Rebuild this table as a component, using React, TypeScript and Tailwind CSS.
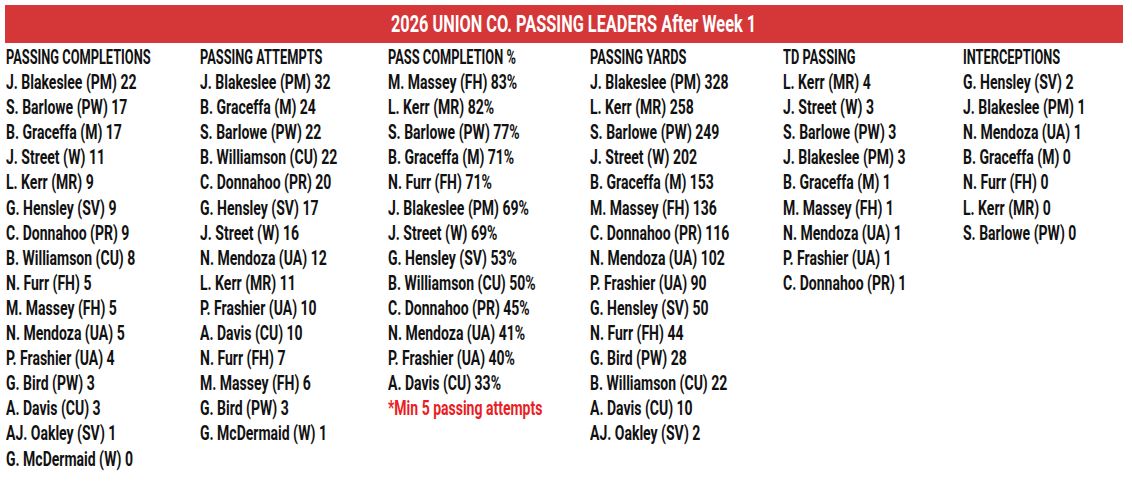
const columns: { title: string; rows: string[]; note?: string }[] = [
  {
    title: "PASSING COMPLETIONS",
    rows: [
      "J. Blakeslee (PM) 22",
      "S. Barlowe (PW) 17",
      "B. Graceffa (M) 17",
      "J. Street (W) 11",
      "L. Kerr (MR) 9",
      "G. Hensley (SV) 9",
      "C. Donnahoo (PR) 9",
      "B. Williamson (CU) 8",
      "N. Furr (FH) 5",
      "M. Massey (FH) 5",
      "N. Mendoza (UA) 5",
      "P. Frashier (UA) 4",
      "G. Bird (PW) 3",
      "A. Davis (CU) 3",
      "AJ. Oakley (SV) 1",
      "G. McDermaid (W) 0",
    ],
  },
  {
    title: "PASSING ATTEMPTS",
    rows: [
      "J. Blakeslee (PM) 32",
      "B. Graceffa (M) 24",
      "S. Barlowe (PW) 22",
      "B. Williamson (CU) 22",
      "C. Donnahoo (PR) 20",
      "G. Hensley (SV) 17",
      "J. Street (W) 16",
      "N. Mendoza (UA) 12",
      "L. Kerr (MR) 11",
      "P. Frashier (UA) 10",
      "A. Davis (CU) 10",
      "N. Furr (FH) 7",
      "M. Massey (FH) 6",
      "G. Bird (PW) 3",
      "G. McDermaid (W) 1",
    ],
  },
  {
    title: "PASS COMPLETION %",
    rows: [
      "M. Massey (FH) 83%",
      "L. Kerr (MR) 82%",
      "S. Barlowe (PW) 77%",
      "B. Graceffa (M) 71%",
      "N. Furr (FH) 71%",
      "J. Blakeslee (PM) 69%",
      "J. Street (W) 69%",
      "G. Hensley (SV) 53%",
      "B. Williamson (CU) 50%",
      "C. Donnahoo (PR) 45%",
      "N. Mendoza (UA) 41%",
      "P. Frashier (UA) 40%",
      "A. Davis (CU) 33%",
    ],
    note: "*Min 5 passing attempts",
  },
  {
    title: "PASSING YARDS",
    rows: [
      "J. Blakeslee (PM) 328",
      "L. Kerr (MR) 258",
      "S. Barlowe (PW) 249",
      "J. Street (W) 202",
      "B. Graceffa (M) 153",
      "M. Massey (FH) 136",
      "C. Donnahoo (PR) 116",
      "N. Mendoza (UA) 102",
      "P. Frashier (UA) 90",
      "G. Hensley (SV) 50",
      "N. Furr (FH) 44",
      "G. Bird (PW) 28",
      "B. Williamson (CU) 22",
      "A. Davis (CU) 10",
      "AJ. Oakley (SV) 2",
    ],
  },
  {
    title: "TD PASSING",
    rows: [
      "L. Kerr (MR) 4",
      "J. Street (W) 3",
      "S. Barlowe (PW) 3",
      "J. Blakeslee (PM) 3",
      "B. Graceffa (M) 1",
      "M. Massey (FH) 1",
      "N. Mendoza (UA) 1",
      "P. Frashier (UA) 1",
      "C. Donnahoo (PR) 1",
    ],
  },
  {
    title: "INTERCEPTIONS",
    rows: [
      "G. Hensley (SV) 2",
      "J. Blakeslee (PM) 1",
      "N. Mendoza (UA) 1",
      "B. Graceffa (M) 0",
      "N. Furr (FH) 0",
      "L. Kerr (MR) 0",
      "S. Barlowe (PW) 0",
    ],
  },
];

// the print font is a condensed face; squeeze bold Roboto to match it
function Line({ text, head, red }: { text: string; head?: boolean; red?: boolean }) {
  return (
    <div
      className={`whitespace-nowrap origin-left ${head ? "scale-x-[0.64]" : "scale-x-[0.7]"} ${
        red ? "text-[#ea1c24]" : ""
      }`}
    >
      {text}
    </div>
  );
}

export default function App() {
  return (
    <div className="w-[1132px] h-[489px] bg-white font-['Roboto',sans-serif] text-[#111] overflow-hidden">
      {/* banner */}
      <div className="pt-[5px] pl-[5px] pr-[9px]">
        <div className="h-[38px] bg-[#d53637] flex items-center justify-center">
          <h1 className="text-white text-[24px] font-bold whitespace-nowrap scale-x-[0.68] translate-x-[10px]">
            2026 UNION CO. PASSING LEADERS After Week 1
          </h1>
        </div>
      </div>

      {/* stat columns */}
      <div className="grid grid-cols-[194px_188px_202px_193px_180px_1fr] pl-[6px] mt-[2px] text-[20px] font-bold leading-[25.1px]">
        {columns.map((col) => (
          <div key={col.title} className="flex flex-col">
            <Line text={col.title} head />
            {col.rows.map((r) => (
              <Line key={r} text={r} />
            ))}
            {col.note && <Line text={col.note} red />}
          </div>
        ))}
      </div>
    </div>
  );
}
